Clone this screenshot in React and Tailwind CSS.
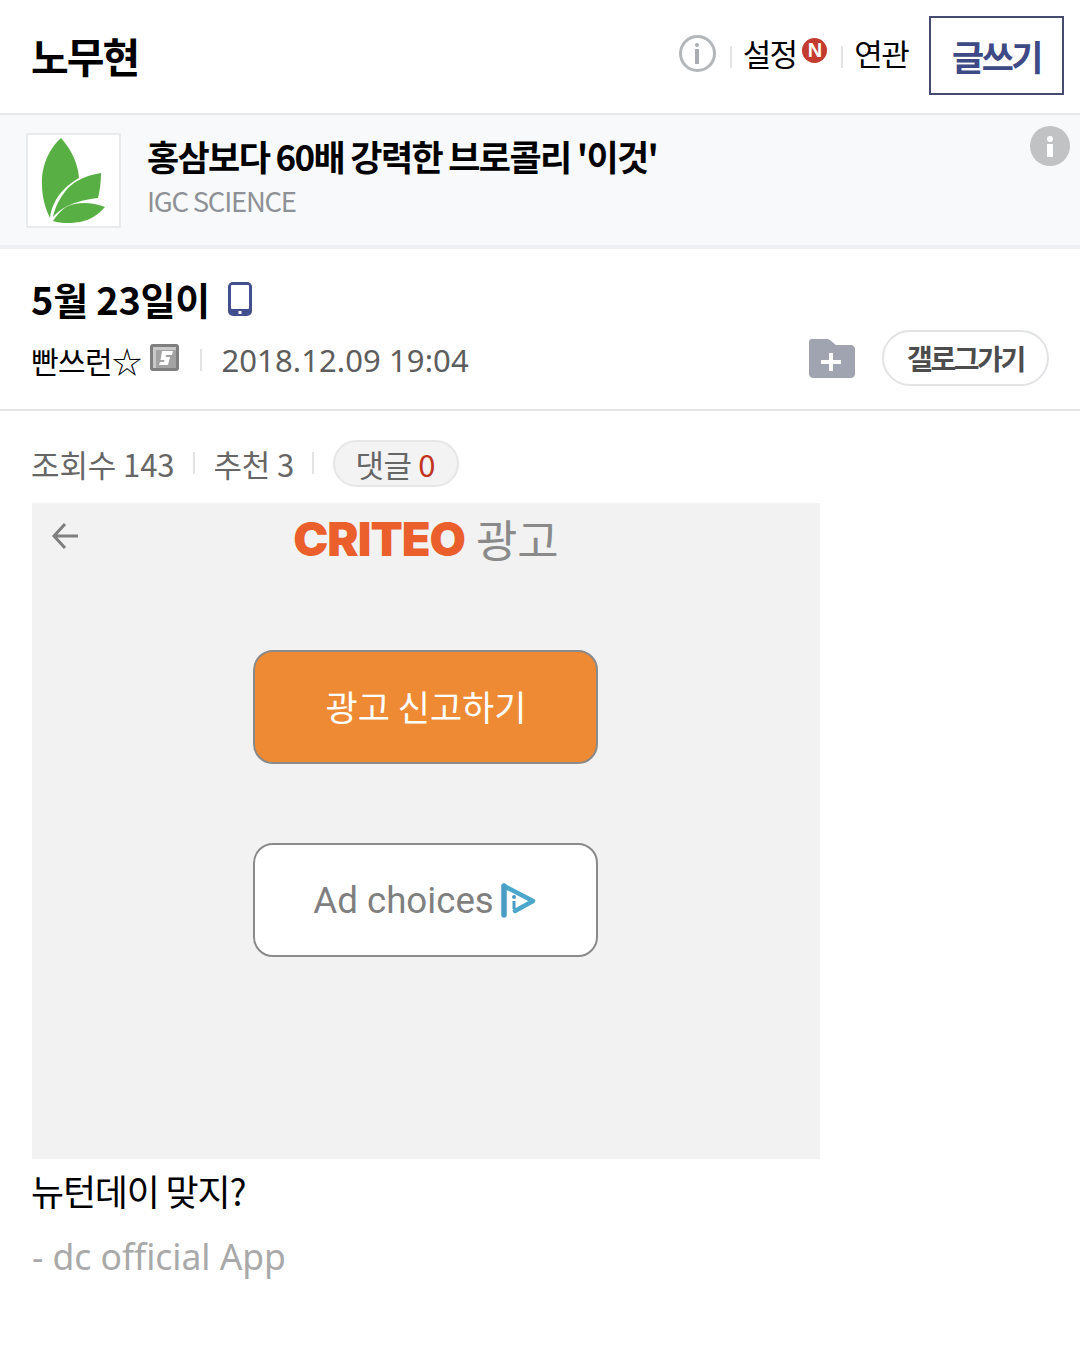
import React from "react";

const FONT = "font-['Noto_Sans_CJK_KR','Noto_Sans',sans-serif]";

const Sep = ({ className = "" }) => <span className={`w-[2px] h-[22px] bg-[#e4e4e4] ${className}`} />;

const LeafLogo = () => (
  <svg width="91" height="91" viewBox="28 135 91 91">
    <path fill="#58b044" d="M61 138 C50 148 41 165 42 185 C42 198 46 210 50 218 C52 203 60 189 79 178 C78 162 70 148 61 138 Z" />
    <path fill="#58b044" d="M101 173 C88 175 76 180 68 188 C60 197 55 207 53 217 C62 207 74 201 98 198 C100 190 101 182 101 173 Z" />
    <path fill="#58b044" d="M105 207 C92 202 78 202 68 206 C62 209 57 215 53 221 C62 224 72 223 80 222 C90 220 98 215 105 207 Z" />
  </svg>
);

const AdChoices = () => (
  <svg width="36" height="36" viewBox="0 0 36 36" fill="none">
    <path d="M3 3 L32 18 L14 28" stroke="#4ba8cc" strokeWidth="4.5" strokeLinejoin="round" strokeLinecap="round" />
    <path d="M3 3 V32" stroke="#4b9cc4" strokeWidth="5.5" strokeLinecap="round" />
    <circle cx="13" cy="14" r="2" fill="#4b9cc4" />
    <path d="M13 18 V26" stroke="#4b9cc4" strokeWidth="3" />
  </svg>
);

const GalleryBadge = () => (
  <svg className="ml-[9px] -mt-[6px]" width="29" height="27" viewBox="0 0 29 27">
    <rect x="0" y="0" width="29" height="27" rx="3" fill="#7f7f7f" />
    <rect x="3" y="3" width="23" height="21" fill="#a3a3a3" />
    <path d="M3 3 H26 V6 H6 V24 H3 Z" fill="#c9c9c9" />
    <path fill="#fff" d="M12 7 H23 L22 11 H16 L15.5 13 H20 L18 21 H9 L10 18 H14 L14.5 16 H10.5 Z" />
  </svg>
);

const App = () => {
  return (
    <div className={`w-[1080px] h-[1364px] bg-white overflow-hidden ${FONT}`}>
      {/* top bar */}
      <header className="h-[115px] border-b-2 border-[#e7e8ea] flex items-center pl-[31px] pr-4">
        <h1 className="text-[41px] font-bold tracking-[-2px] text-black leading-none flex-1 -mt-[2px]">노무현</h1>
        <div className="flex items-center">
          <div className="w-[37px] h-[37px] rounded-full border-[3px] border-[#b4b7ba] flex flex-col items-center justify-center gap-[2px] -mt-[7px]">
            <span className="w-[4px] h-[4px] rounded-full bg-[#a9adb1]" />
            <span className="w-[4px] h-[15px] bg-[#a9adb1]" />
          </div>
          <Sep className="ml-[14px]" />
          <span className="ml-[11px] text-[31px] tracking-[-1.7px] text-black leading-none -mt-[9px]">설정</span>
          <span className="ml-[6px] -mt-[13px] w-[25px] h-[25px] rounded-full bg-[#c23b2e] flex items-center justify-center text-white text-[20px] font-black leading-none font-['Liberation_Sans']">N</span>
          <Sep className="ml-[14px]" />
          <span className="ml-[11px] text-[31px] tracking-[-1.7px] text-black leading-none -mt-[9px]">연관</span>
          <button className="ml-[21px] -mt-[2px] w-[135px] h-[79px] border-2 border-[#444a70] flex items-center justify-center text-[35px] font-bold tracking-[-2.5px] text-[#3e4a85] leading-none">
            글쓰기
          </button>
        </div>
      </header>

      {/* ad strip */}
      <section className="relative h-[134px] bg-[#f8f9fb] border-b-4 border-[#eef0f3] flex pl-[26px] pt-[18px]">
        <div className="w-[95px] h-[95px] bg-white border-2 border-[#e9eaec] flex items-center justify-center">
          <LeafLogo />
        </div>
        <div className="ml-[26px]">
          <p className="text-[35px] font-bold tracking-[-1.65px] text-black leading-none mt-[5px]">홍삼보다 60배 강력한 브로콜리 '이것'</p>
          <p className="text-[27.5px] tracking-[-1.25px] text-[#8e9196] leading-none mt-[14px]">IGC SCIENCE</p>
        </div>
        <span className="absolute right-[10px] top-[11px] w-[40px] h-[40px] rounded-full bg-[#c1c2c4] flex flex-col items-center justify-center gap-[2px]">
          <span className="w-[6px] h-[6px] rounded-full bg-white" />
          <span className="w-[6px] h-[13px] bg-white" />
        </span>
      </section>

      {/* post title */}
      <section className="h-[162px] border-b-2 border-[#e4e5e7] pl-[31px] pr-[31px] pt-[28px]">
        <div className="flex items-center h-[44px]">
          <h2 className="text-[38px] font-bold tracking-[-0.25px] text-black leading-none">5월 23일이</h2>
          <svg className="ml-[17px]" width="26" height="36" viewBox="0 0 26 36">
            <rect x="1" y="1" width="24" height="34" rx="5" fill="#444f8f" />
            <rect x="4" y="4" width="18" height="24" rx="1" fill="#fff" />
            <rect x="11.5" y="30" width="3" height="3" fill="#fff" />
          </svg>
        </div>
        <div className="flex items-center mt-[9px] h-[56px]">
          <span className="mt-[4px] text-[30px] tracking-[-0.6px] text-black leading-none">빤쓰런☆</span>
          <span className="mt-[4px] flex"><GalleryBadge /></span>
          <Sep className="ml-[21px] mt-[4px]" />
          <span className="mt-[4px] ml-[19px] text-[31px] tracking-[0.1px] text-[#5d5d5d] leading-none font-['Noto_Sans']">2018.12.09 19:04</span>
          <span className="flex-1" />
          <svg width="46" height="39" viewBox="0 0 46 39">
            <path fill="#a0a3b0" d="M3 0 H18 C20 0 21 1 22 2 L27 6 H42 C44 6 46 8 46 10 V35 C46 37 44 39 42 39 H4 C2 39 0 37 0 35 V3 C0 1 1 0 3 0 Z" />
            <path stroke="#fff" strokeWidth="4" d="M22 14 V32 M12 23 H32" />
          </svg>
          <button className="ml-[27px] w-[167px] h-[56px] rounded-full border-2 border-[#e2e3e5] text-[28px] font-bold tracking-[-2.4px] text-[#4d4d4d] leading-none">
            갤로그가기
          </button>
        </div>
      </section>

      {/* stats */}
      <div className="h-[92px] pl-[31px] flex items-center pt-[12px] text-[31px] text-[#666] leading-none">
        <span className="tracking-[-0.1px]">조회수 143</span>
        <Sep className="ml-[19px]" />
        <span className="ml-[18px] tracking-[-0.1px]">추천 3</span>
        <Sep className="ml-[18px]" />
        <span className="ml-[19px] w-[126px] h-[47px] pr-[2px] rounded-full bg-[#f3f3f3] border-2 border-[#e6e6e6] flex items-center justify-center tracking-[-0.4px]">
          댓글&nbsp;<span className="text-[#c23321]">0</span>
        </span>
      </div>

      {/* ad report frame */}
      <div className="ml-8 w-[788px] h-[656px] bg-[#f2f2f2] flex flex-col items-center font-['Roboto','Noto_Sans_CJK_KR',sans-serif]">
        <div className="relative w-full h-[147px] flex justify-center pt-[10px]">
          <svg className="absolute left-[19px] top-[18px]" width="30" height="30" viewBox="0 0 30 30" fill="none">
            <path d="M27 15 H3 M14 3 L3 15 L14 27" stroke="#7f7f7f" strokeWidth="3" />
          </svg>
          <div className="flex items-center h-[50px]">
            <span className="text-[47px] font-black tracking-[-1px] text-[#ea5f2c] leading-none font-['Inter']">CRITEO</span>
            <span className="ml-[11px] text-[45px] text-[#8a8a8a] leading-none font-['Noto_Sans_CJK_KR']">광고</span>
          </div>
        </div>
        <button className="mr-[2px] w-[345px] h-[114px] pb-[4px] pl-[2px] rounded-[20px] bg-[#ee8a33] border-2 border-[#8a8a8a] text-[35px] text-white leading-none font-['Noto_Sans_CJK_KR']">
          광고 신고하기
        </button>
        <button className="mr-[2px] mt-[79px] w-[345px] h-[114px] pt-[2px] rounded-[20px] bg-white border-2 border-[#8a8a8a] flex items-center justify-center text-[36.7px] text-[#7f7f7f] leading-none">
          Ad choices
          <span className="ml-[7px] flex"><AdChoices /></span>
        </button>
      </div>

      {/* body */}
      <p className="pl-[31px] mt-[13px] text-[36px] tracking-[-1.2px] text-black leading-none">뉴턴데이 맞지?</p>
      <p className="pl-8 mt-[31px] text-[35.5px] tracking-[-0.05px] text-[#a9a9a9] leading-none font-['Noto_Sans']">- dc official App</p>
    </div>
  );
};

export default App;
